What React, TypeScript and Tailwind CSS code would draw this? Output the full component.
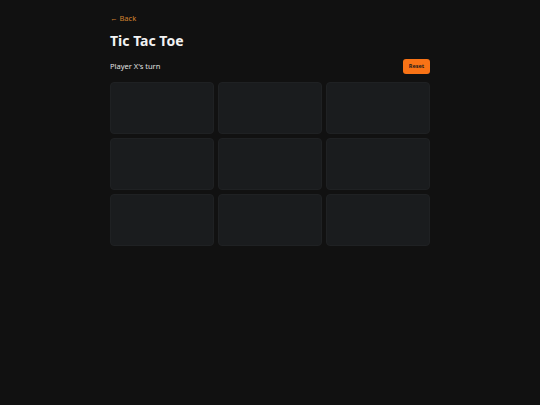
import React, { useState } from "react";

type Cell = "X" | "O" | null;

function Square({ value, onClick }: { value: Cell; onClick: () => void }) {
  return (
    <button
      onClick={onClick}
      className="h-[52px] rounded-[4px] bg-[#1a1c1e] border border-[#1f2123] text-[20px] font-bold text-white"
    >
      {value}
    </button>
  );
}

export default function App() {
  const [board, setBoard] = useState<Cell[]>(Array(9).fill(null));
  const [xTurn, setXTurn] = useState(true);

  const play = (i: number) => {
    if (board[i]) return;
    const next = board.slice();
    next[i] = xTurn ? "X" : "O";
    setBoard(next);
    setXTurn(!xTurn);
  };

  const reset = () => {
    setBoard(Array(9).fill(null));
    setXTurn(true);
  };

  return (
    <div className="min-h-[405px] w-full bg-[#111111] font-['Noto_Sans',sans-serif]">
      <div className="mx-auto w-[320px] pt-[13px]">
        <a className="block text-[7.5px] leading-[10px] text-[#d4812e]">← Back</a>
        <h1 className="mt-[8px] text-[14px] leading-[20px] font-bold text-[#f3f3f3]">
          Tic Tac Toe
        </h1>
        <div className="mt-[8px] flex items-center justify-between">
          <p className="text-[7.5px] text-[#e0e0e0]">Player {xTurn ? "X" : "O"}'s turn</p>
          <button
            onClick={reset}
            className="h-[15px] w-[27px] rounded-[3px] bg-[#f97316] text-[5.5px] font-bold text-[#1a1a1a]"
          >
            Reset
          </button>
        </div>
        <div className="mt-[8px] grid grid-cols-3 gap-[4px]">
          {board.map((v, i) => (
            <Square key={i} value={v} onClick={() => play(i)} />
          ))}
        </div>
      </div>
    </div>
  );
}
